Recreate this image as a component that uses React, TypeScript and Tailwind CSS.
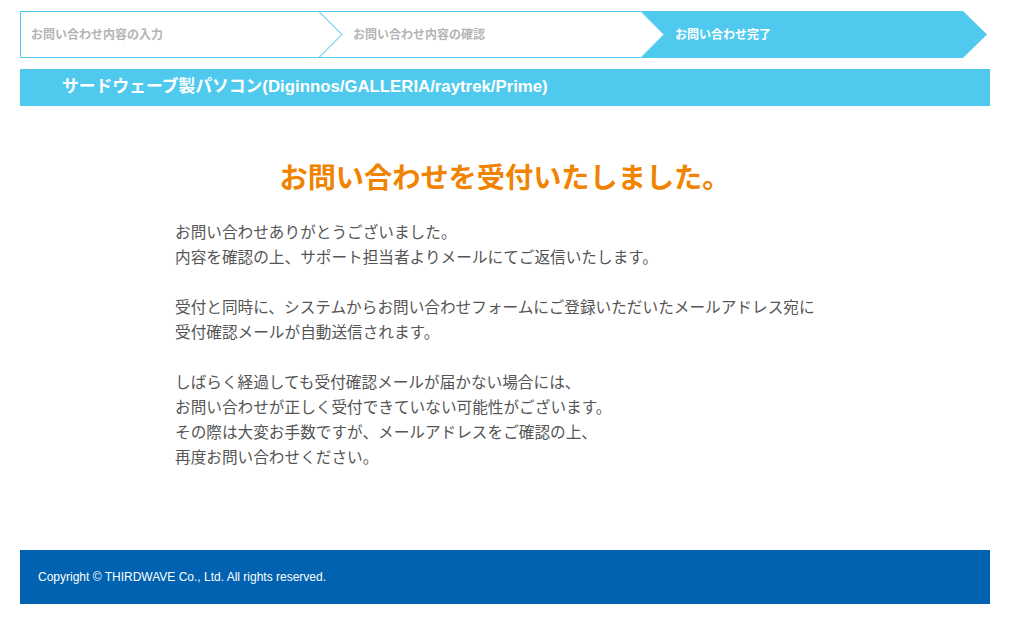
const font = "font-['Liberation_Sans','Noto_Sans_CJK_JP',sans-serif]";
const blue = "#4fcaee";

function StepShape({ kind }: { kind: "first" | "middle" | "last" }) {
  // shapes of the progress arrows; drawn in px, box is 47px tall
  if (kind === "first") {
    return (
      <svg className="absolute inset-0" width="322" height="47" viewBox="0 0 322 47">
        <path d="M0.5 0.5 H299 L322 23.5 L299 46.5 H0.5 Z" fill="#fff" stroke={blue} strokeWidth="1" />
      </svg>
    );
  }
  if (kind === "middle") {
    return (
      <svg className="absolute inset-0" width="345" height="47" viewBox="0 0 345 47">
        <path d="M0 0.5 H322 L345 23.5 L322 46.5 H0 L23 23.5 Z" fill="#fff" stroke={blue} strokeWidth="1" />
      </svg>
    );
  }
  return (
    <svg className="absolute inset-0" width="346" height="47" viewBox="0 0 346 47">
      <path d="M0 0 H322 L346 23.5 L322 47 H0 L23 23.5 Z" fill={blue} />
    </svg>
  );
}

function Step({ label, kind }: { label: string; kind: "first" | "middle" | "last" }) {
  const w = kind === "first" ? "w-[322px] pl-[11px]" : kind === "middle" ? "w-[345px] -ml-[23px] pl-[34px]" : "w-[346px] -ml-[23px] pl-[34px]";
  return (
    <div className={`relative h-[47px] flex items-center ${w}`}>
      <StepShape kind={kind} />
      <span
        className={`relative text-[12px] font-bold ${kind === "last" ? "text-white" : "text-[#b4b4b4]"}`}
      >
        {label}
      </span>
    </div>
  );
}

export default function App() {
  return (
    <div className={`w-[1020px] h-[621px] bg-white ${font}`}>
      <div className="px-[20px] pt-[11px] w-[1010px]">
        {/* progress */}
        <div className="flex">
          <Step kind="first" label="お問い合わせ内容の入力" />
          <Step kind="middle" label="お問い合わせ内容の確認" />
          <Step kind="last" label="お問い合わせ完了" />
        </div>

        <div className="mt-[11px] h-[37px] bg-[#4fcaee] flex items-center pl-[42px]">
          <h2 className="text-white text-[16.8px] font-bold leading-none">
            サードウェーブ製パソコン(Diginnos/GALLERIA/raytrek/Prime)
          </h2>
        </div>

        <h1 className="mt-[54px] text-center text-[28.2px] font-bold leading-[36px] text-[#f08300]">
          お問い合わせを受付いたしました。
        </h1>

        <div className="mx-auto mt-[24px] w-[660px] text-[15.65px] leading-[25px] text-[#555]">
          <p>
            お問い合わせありがとうございました。
            <br />
            内容を確認の上、サポート担当者よりメールにてご返信いたします。
          </p>
          <p className="mt-[25px]">
            受付と同時に、システムからお問い合わせフォームにご登録いただいたメールアドレス宛に
            <br />
            受付確認メールが自動送信されます。
          </p>
          <p className="mt-[25px]">
            しばらく経過しても受付確認メールが届かない場合には、
            <br />
            お問い合わせが正しく受付できていない可能性がございます。
            <br />
            その際は大変お手数ですが、メールアドレスをご確認の上、
            <br />
            再度お問い合わせください。
          </p>
        </div>

        <footer className="mt-[80px] h-[54px] bg-[#0062b1] flex items-center pl-[18px]">
          <p className="text-white text-[12px]">Copyright © THIRDWAVE Co., Ltd. All rights reserved.</p>
        </footer>
      </div>
    </div>
  );
}
